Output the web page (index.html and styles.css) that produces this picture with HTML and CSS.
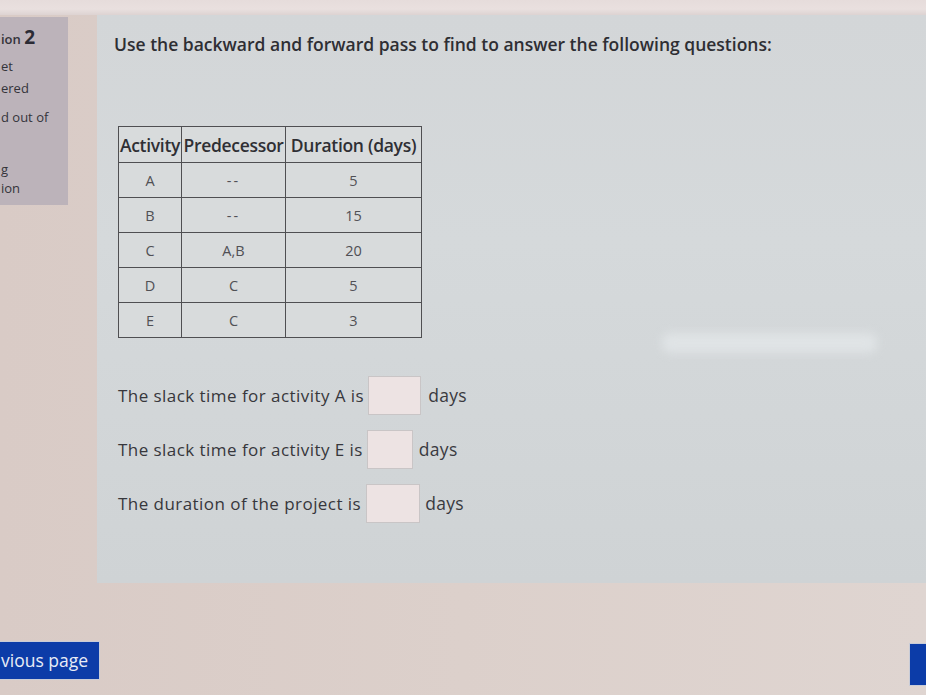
FILE: index.html
```html
<!DOCTYPE html>
<html>
<head>
<meta charset="utf-8">
<link rel="stylesheet" href="styles.css">
</head>
<body>
<div class="topstrip"></div>
<div class="layout">
  <div class="info">
    <div class="qno">ion <span class="num">2</span></div>
    <div class="line l1">et</div>
    <div class="line">ered</div>
    <div class="line l3">d out of</div>
    <div class="line l4">g</div>
    <div class="line">ion</div>
  </div>
  <div class="panel">
    <p class="lead">Use the backward and forward pass to find to answer the following questions:</p>
    <table class="grid">
      <thead>
        <tr><th class="c1">Activity</th><th class="c2">Predecessor</th><th class="c3">Duration (days)</th></tr>
      </thead>
      <tbody>
        <tr><td>A</td><td class="dash">--</td><td>5</td></tr>
        <tr><td>B</td><td class="dash">--</td><td>15</td></tr>
        <tr><td>C</td><td>A,B</td><td>20</td></tr>
        <tr><td>D</td><td>C</td><td>5</td></tr>
        <tr><td>E</td><td>C</td><td>3</td></tr>
      </tbody>
    </table>
    <div class="questions">
      <div class="q"><span class="qt">The slack time for activity A is</span><span class="box b1"></span><span class="unit">days</span></div>
      <div class="q"><span class="qt">The slack time for activity E is</span><span class="box b2"></span><span class="unit">days</span></div>
      <div class="q"><span class="qt">The duration of the project is</span><span class="box b3"></span><span class="unit">days</span></div>
    </div>
    <div class="glare"></div>
  </div>
</div>
<div class="footer">
  <div class="btn prev">vious page</div>
  <div class="btn next"></div>
</div>
</body>
</html>
```
FILE: styles.css
```css
html, body { margin: 0; padding: 0; }
body {
  width: 926px;
  height: 695px;
  overflow: hidden;
  background: linear-gradient(90deg, #d9cbc6 0%, #dcd0cb 50%, #dfd5d1 100%);
  font-family: "Open Sans", "Noto Sans", sans-serif;
  color: #333;
}
.topstrip {
  height: 15px;
  background: linear-gradient(180deg, #e6dcdb 0%, #e9e0df 60%, #ddd3d2 100%);
}
.layout {
  display: flex;
  align-items: flex-start;
  gap: 29px;
}
.info {
  width: 68px;
  height: 188px;
  margin-top: 2px;
  background: #bcb3ba;
  box-sizing: border-box;
  padding: 13px 0 0 1px;
  font-size: 13px;
  color: #34343a;
  line-height: 14px;
}
.qno { font-size: 13px; font-weight: 600; }
.qno .num { font-size: 19px; font-weight: 700; color: #2b2b35; }
.line { margin-top: 8px; }
.line.l1 { margin-top: 13px; }
.line.l3 { margin-top: 15px; }
.line.l4 { margin-top: 38px; }
.info .line:last-child { margin-top: 5px; }

.panel {
  position: relative;
  flex: 1;
  height: 568px;
  background: linear-gradient(180deg, #d3d6d8 0%, #d5d9db 40%, #cfd3d5 100%);
  box-sizing: border-box;
  padding: 18px 0 0 17px;
}
.lead {
  margin: 0;
  font-size: 17.5px;
  font-weight: 600;
  color: #2e2e33;
  line-height: 22px;
}
.grid {
  margin: 71px 0 0 4px;
  border-collapse: collapse;
  background: #d8dbdc;
}
.grid th, .grid td {
  border: 1.5px solid #4f4f52;
  padding: 0;
  text-align: center;
}
.grid th {
  height: 35px;
  font-size: 17.5px;
  font-weight: 600;
  color: #2f2f34;
  letter-spacing: -0.3px;
  white-space: nowrap;
}
.grid .c1 { width: 62px; }
.grid .c2 { width: 103px; }
.grid .c3 { width: 135px; }
.grid td {
  height: 34px;
  font-size: 14.5px;
  color: #505055;
}
.grid td.dash { letter-spacing: 2px; }
.questions {
  margin-top: 37px;
  margin-left: 4px;
  display: flex;
  flex-direction: column;
  gap: 14px;
}
.q {
  display: flex;
  align-items: center;
  height: 40px;
}
.qt {
  font-size: 17px;
  color: #37373c;
  letter-spacing: 0.45px;
}
.box {
  display: block;
  height: 39px;
  background: #ede3e3;
  border: 1px solid #c9c5c6;
  box-sizing: border-box;
}
.b1 { width: 53px; margin: 0 7px 0 4px; }
.b2 { width: 46px; margin: 0 6px 0 4px; }
.b3 { width: 54px; margin: 0 5px 0 5px; }
.unit {
  font-size: 17.5px;
  color: #3a3a3f;
  letter-spacing: 0.3px;
}
.glare {
  position: absolute;
  left: 565px;
  top: 318px;
  width: 215px;
  height: 20px;
  background: #e4e8ea;
  filter: blur(5px);
  opacity: 0.75;
  border-radius: 8px;
}
.footer {
  display: flex;
  justify-content: space-between;
  align-items: flex-start;
  margin-top: 58px;
}
.btn {
  background: #0c3ca8;
  color: #e8ecf6;
  box-sizing: border-box;
}
.prev {
  width: 100px;
  height: 39px;
  line-height: 37px;
  font-size: 17.5px;
  font-weight: 500;
  padding-left: 1px;
  border: 1px solid #c8ccd8;
  border-left: none;
}
.next {
  width: 17px;
  height: 43px;
  margin-top: 2px;
  border: 1px solid #c8ccd8;
  border-right: none;
}
```
